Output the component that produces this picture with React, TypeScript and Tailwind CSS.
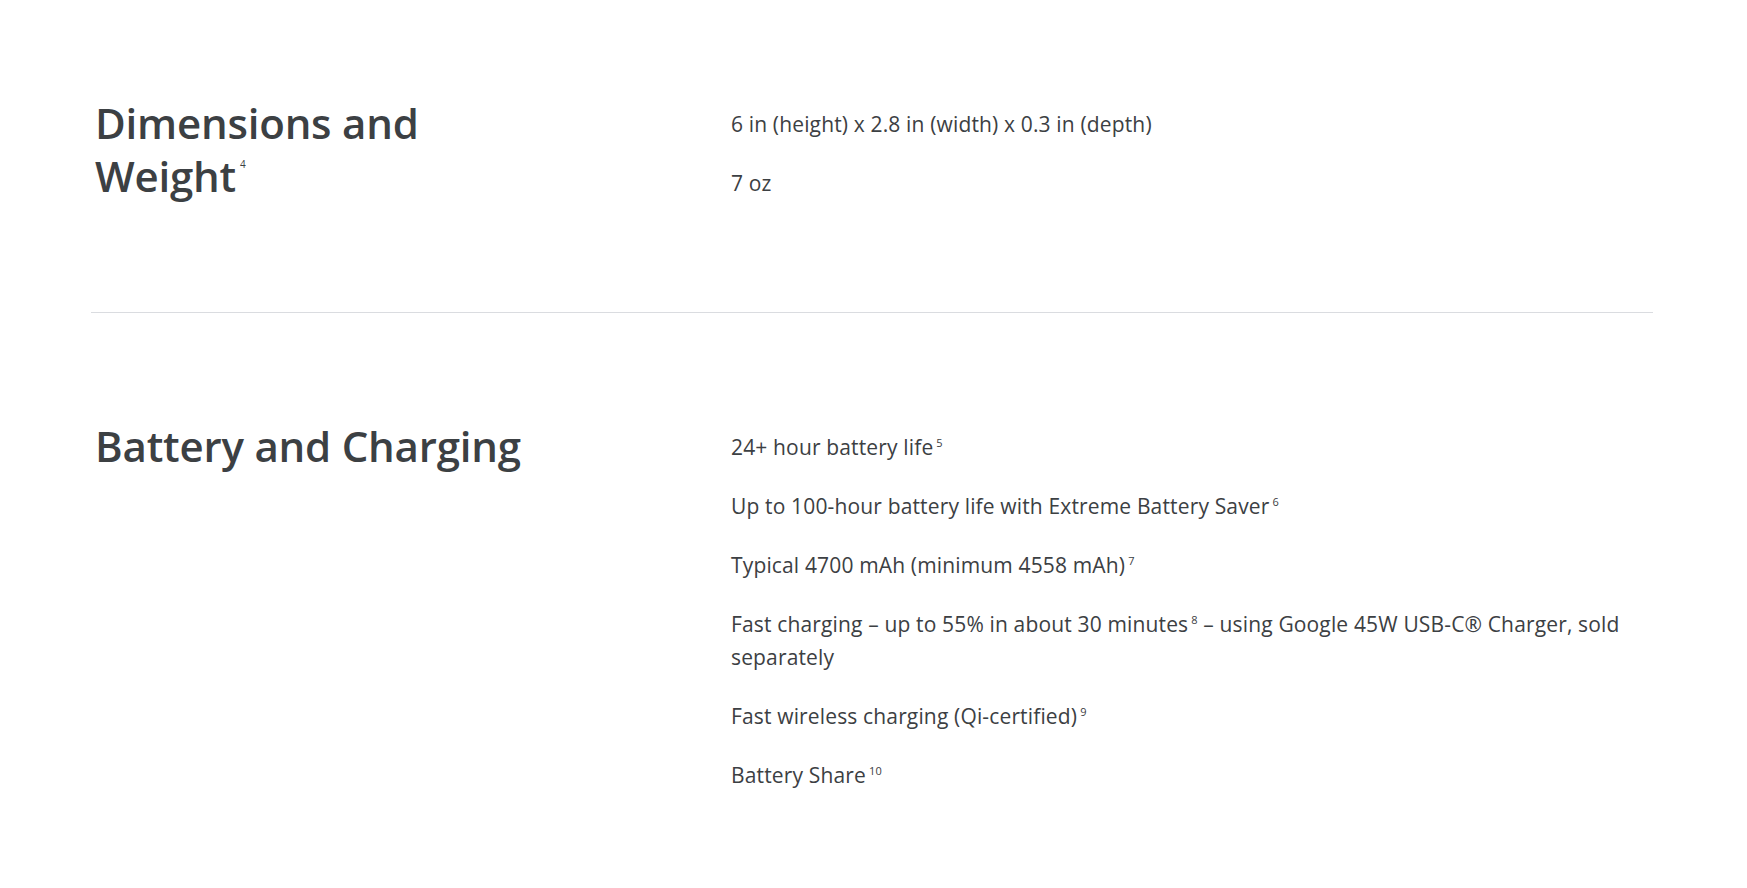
import React from "react"

type Spec = { text: React.ReactNode }

function Sup({ n }: { n: string }) {
  return <sup className="ml-[3px] text-[11px] align-baseline top-[-8px] leading-none">{n}</sup>
}

const DIMENSIONS: Spec[] = [
  { text: "6 in (height) x 2.8 in (width) x 0.3 in (depth)" },
  { text: "7 oz" },
]

const BATTERY: Spec[] = [
  { text: <>24+ hour battery life<Sup n="5" /></> },
  { text: <>Up to 100-hour battery life with Extreme Battery Saver<Sup n="6" /></> },
  { text: <>Typical 4700 mAh (minimum 4558 mAh)<Sup n="7" /></> },
  {
    text: (
      <>
        Fast charging – up to 55% in about 30 minutes<Sup n="8" /> – using Google 45W USB-C® Charger, sold separately
      </>
    ),
  },
  { text: <>Fast wireless charging (Qi-certified)<Sup n="9" /></> },
  { text: <>Battery Share<Sup n="10" /></> },
]

function Section({ title, items, className }: { title: React.ReactNode; items: Spec[]; className: string }) {
  return (
    <section className={"flex " + className}>
      <div className="w-[640px] shrink-0 pl-[4px]">
        <h2 className="w-[440px] text-[42px] leading-[53px] font-semibold tracking-[-0.2px] text-[#3c4043]">{title}</h2>
      </div>
      <ul className="flex-1 flex flex-col gap-[26px] pt-[12px] text-[21px] leading-[33px] tracking-[0.15px] text-[#3c4043]">
        {items.map((item, i) => (
          <li key={i}>{item.text}</li>
        ))}
      </ul>
    </section>
  )
}

export default function App() {
  return (
    <div className="min-h-screen bg-white" style={{ fontFamily: "'Open Sans', 'Noto Sans', sans-serif" }}>
      <div className="ml-[91px] mr-[94px]">
        <Section
          className="pt-[96px] pb-[110px]"
          title={
            <>
              Dimensions and Weight
              <sup className="ml-[4px] text-[10px] font-normal align-baseline top-[-24px] leading-none">4</sup>
            </>
          }
          items={DIMENSIONS}
        />
        <div className="h-px bg-[#dadce0]" />
        <Section className="pt-[106px] pb-[96px]" title="Battery and Charging" items={BATTERY} />
      </div>
    </div>
  )
}
